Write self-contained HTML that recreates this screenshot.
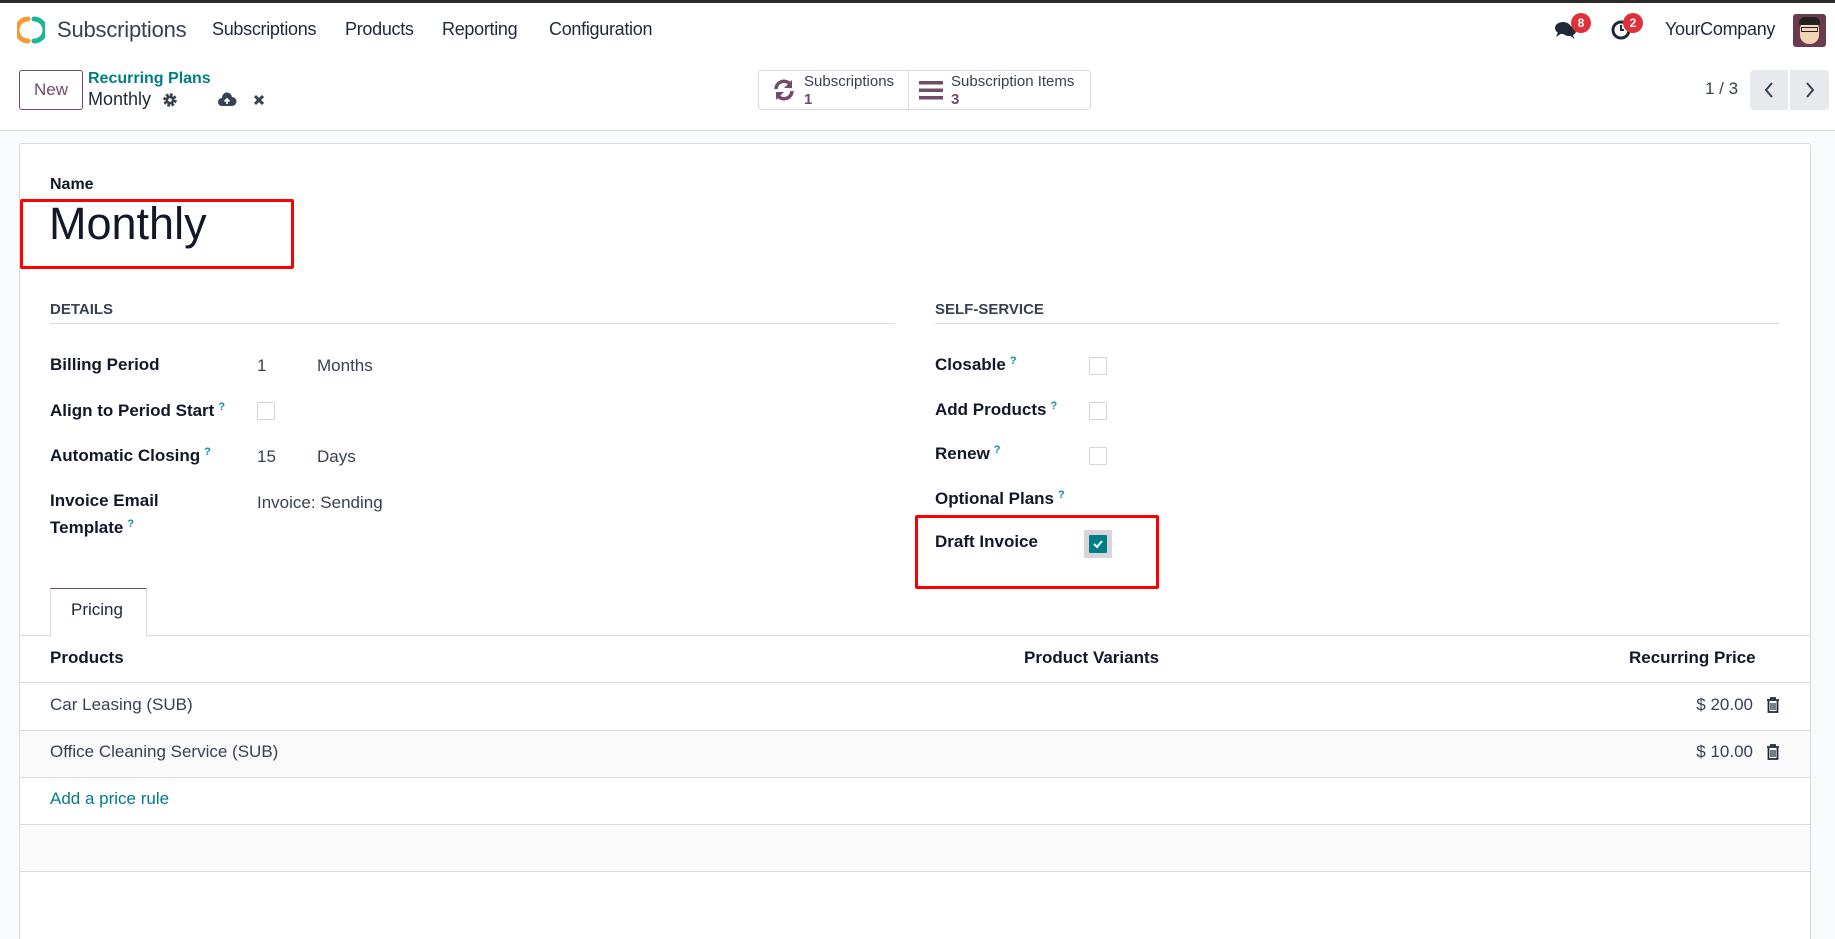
<!DOCTYPE html>
<html style="overflow:hidden;width:1835px;height:939px"><head><meta charset="utf-8"><style>
*{box-sizing:border-box;margin:0;padding:0}
body{width:1835px;height:939px;overflow:hidden;background:#f9fafb;font-family:"Liberation Sans",sans-serif;color:#374151;position:relative;font-size:17px}
.a{position:absolute;white-space:nowrap}
.lbl{font-weight:bold;color:#111827;font-size:17px}
.q{color:#0d8fa8;font-size:11px;vertical-align:top;margin-left:4px;font-weight:bold}
.cb{position:absolute;width:18px;height:18px;border:1px solid #d1d5db;background:#fff;border-radius:1px}
.hl{position:absolute;height:1px;background:#d8dadd}
</style></head><body>
<div class="a" style="left:0;top:0;width:1835px;height:3px;background:#2b2b2b"></div>
<div class="a" style="left:0;top:3px;width:1835px;height:128px;background:#fff;border-bottom:1px solid #d8dadd"></div>
<svg class="a" style="left:17px;top:16px" width="28" height="28" viewBox="0 0 28 28"><path d="M11 3 A11 11 0 0 0 11 25" stroke="#f39c34" stroke-width="5" fill="none" stroke-linecap="round"/><path d="M17 3 A11 11 0 0 1 17 25" stroke="#1bb59e" stroke-width="5" fill="none" stroke-linecap="round"/></svg>
<div class="a" style="left:57px;top:17px;font-size:22px;color:#374151;letter-spacing:-0.2px">Subscriptions</div>
<div class="a" style="left:212px;top:19px;font-size:18px;color:#1f2937;letter-spacing:-0.3px">Subscriptions</div>
<div class="a" style="left:345px;top:19px;font-size:18px;color:#1f2937;letter-spacing:-0.3px">Products</div>
<div class="a" style="left:442px;top:19px;font-size:18px;color:#1f2937;letter-spacing:-0.3px">Reporting</div>
<div class="a" style="left:549px;top:19px;font-size:18px;color:#1f2937;letter-spacing:-0.3px">Configuration</div>
<svg class="a" style="left:1554px;top:20px" width="24" height="20" viewBox="0 0 24 20"><ellipse cx="9" cy="8" rx="8" ry="6" fill="#1f2937"/><path d="M4 12 L2 17 L8 13Z" fill="#1f2937"/><ellipse cx="15" cy="11" rx="7" ry="5" fill="#1f2937"/><path d="M18 14 L21 19 L15 15Z" fill="#1f2937"/></svg>
<div class="a" style="left:1571px;top:13px;width:20px;height:20px;border-radius:10px;background:#e0313b;color:#fff;font-size:12px;font-weight:bold;text-align:center;line-height:20px">8</div>
<svg class="a" style="left:1610px;top:19px" width="22" height="22" viewBox="0 0 22 22"><circle cx="11" cy="11" r="8" stroke="#1f2937" stroke-width="3" fill="none"/><path d="M11 6V11H14" stroke="#1f2937" stroke-width="2" fill="none"/></svg>
<div class="a" style="left:1623px;top:13px;width:20px;height:20px;border-radius:10px;background:#e0313b;color:#fff;font-size:12px;font-weight:bold;text-align:center;line-height:20px">2</div>
<div class="a" style="left:1665px;top:19px;font-size:18px;color:#1f2937;letter-spacing:-0.3px">YourCompany</div>
<div class="a" style="left:1793px;top:14px;width:33px;height:33px;border-radius:3px;background:#6b3a4e;overflow:hidden"><div style="position:absolute;left:7px;top:6px;width:19px;height:24px;border-radius:9px;background:#f2d3b3"></div><div style="position:absolute;left:6px;top:3px;width:21px;height:8px;border-radius:6px 6px 2px 2px;background:#222"></div><div style="position:absolute;left:8px;top:13px;width:17px;height:5px;border:1.5px solid #222"></div></div>
<div class="a" style="left:19px;top:70px;width:64px;height:40px;border:1px solid #714b67;border-radius:3px;background:#fff;color:#714b67;font-size:17px;text-align:center;line-height:38px">New</div>
<div class="a" style="left:88px;top:70px;font-size:16px;color:#017e84;font-weight:bold">Recurring Plans</div>
<div class="a" style="left:88px;top:89px;font-size:18px;color:#1f2937">Monthly</div>
<svg class="a" style="left:162px;top:92px" width="16" height="16" viewBox="0 0 16 16"><circle cx="8" cy="8" r="5" fill="none" stroke="#374151" stroke-width="3.5" stroke-dasharray="2.5 1.4"/><circle cx="8" cy="8" r="4.5" fill="#374151"/><circle cx="8" cy="8" r="1.8" fill="#fff"/></svg>
<svg class="a" style="left:217px;top:92px" width="20" height="16" viewBox="0 0 20 16"><path d="M5 14 A4 4 0 0 1 5 6 A5 5 0 0 1 15 5 A4.5 4.5 0 0 1 15 14Z" fill="#374151"/><path d="M10 12V7M7.5 9.5L10 7L12.5 9.5" stroke="#fff" stroke-width="1.8" fill="none"/></svg>
<svg class="a" style="left:253px;top:94px" width="12" height="12" viewBox="0 0 12 12"><path d="M2 2L10 10M10 2L2 10" stroke="#374151" stroke-width="3"/></svg>
<div class="a" style="left:758px;top:70px;width:333px;height:40px;border:1px solid #d8dadd;border-radius:4px;background:#fff"></div>
<div class="a" style="left:908px;top:71px;width:1px;height:38px;background:#d8dadd"></div>
<svg class="a" style="left:772px;top:78px" width="24" height="24" viewBox="0 0 24 24"><path d="M4 11 A8 8 0 0 1 18 6" stroke="#714b67" stroke-width="3.5" fill="none"/><path d="M20 2V10H12Z" fill="#714b67"/><path d="M20 13 A8 8 0 0 1 6 18" stroke="#714b67" stroke-width="3.5" fill="none"/><path d="M4 22V14H12Z" fill="#714b67"/></svg>
<div class="a" style="left:804px;top:73px;font-size:15px;color:#374151">Subscriptions</div>
<div class="a" style="left:804px;top:91px;font-size:15px;color:#714b67;font-weight:bold">1</div>
<svg class="a" style="left:919px;top:80px" width="24" height="20" viewBox="0 0 24 20"><rect x="0" y="1" width="24" height="3.5" fill="#714b67"/><rect x="0" y="8.5" width="24" height="3.5" fill="#714b67"/><rect x="0" y="16" width="24" height="3.5" fill="#714b67"/></svg>
<div class="a" style="left:951px;top:73px;font-size:15px;color:#374151">Subscription Items</div>
<div class="a" style="left:951px;top:91px;font-size:15px;color:#714b67;font-weight:bold">3</div>
<div class="a" style="left:1705px;top:79px;font-size:17px;color:#374151">1 / 3</div>
<div class="a" style="left:1750px;top:70px;width:38px;height:40px;background:#e7e9ed;border-radius:4px 0 0 4px"></div>
<div class="a" style="left:1790px;top:70px;width:39px;height:40px;background:#e7e9ed;border-radius:0 4px 4px 0"></div>
<svg class="a" style="left:1762px;top:80px" width="14" height="20" viewBox="0 0 14 20"><path d="M10 3L4 10L10 17" stroke="#374151" stroke-width="2" fill="none"/></svg>
<svg class="a" style="left:1803px;top:80px" width="14" height="20" viewBox="0 0 14 20"><path d="M4 3L10 10L4 17" stroke="#374151" stroke-width="2" fill="none"/></svg>
<div class="a" style="left:19px;top:143px;width:1792px;height:796px;background:#fff;border:1px solid #d8dadd;border-bottom:none;border-radius:3px 3px 0 0"></div>
<div class="a lbl" style="left:50px;top:176px;font-size:16px">Name</div>
<div class="a" style="left:49px;top:198px;font-size:45px;color:#111827">Monthly</div>
<div class="a" style="left:20px;top:199px;width:274px;height:70px;border:3.5px solid #ff0000;border-radius:2px"></div>
<div class="a lbl" style="left:50px;top:301px;font-size:15px;color:#374151">DETAILS</div>
<div class="hl" style="left:50px;top:323px;width:845px"></div>
<div class="a lbl" style="left:935px;top:301px;font-size:15px;color:#374151">SELF-SERVICE</div>
<div class="hl" style="left:935px;top:323px;width:844px"></div>
<div class="a lbl" style="left:50px;top:355px">Billing Period</div>
<div class="a" style="left:257px;top:356px">1</div><div class="a" style="left:317px;top:356px">Months</div>
<div class="a lbl" style="left:50px;top:401px">Align to Period Start<span class="q">?</span></div>
<div class="cb" style="left:257px;top:402px"></div>
<div class="a lbl" style="left:50px;top:446px">Automatic Closing<span class="q">?</span></div>
<div class="a" style="left:257px;top:447px">15</div><div class="a" style="left:317px;top:447px">Days</div>
<div class="a lbl" style="left:50px;top:491px">Invoice Email</div>
<div class="a lbl" style="left:50px;top:518px">Template<span class="q">?</span></div>
<div class="a" style="left:257px;top:493px">Invoice: Sending</div>
<div class="a lbl" style="left:935px;top:355px">Closable<span class="q">?</span></div>
<div class="cb" style="left:1089px;top:357px"></div>
<div class="a lbl" style="left:935px;top:400px">Add Products<span class="q">?</span></div>
<div class="cb" style="left:1089px;top:402px"></div>
<div class="a lbl" style="left:935px;top:444px">Renew<span class="q">?</span></div>
<div class="cb" style="left:1089px;top:447px"></div>
<div class="a lbl" style="left:935px;top:489px">Optional Plans<span class="q">?</span></div>
<div class="a lbl" style="left:935px;top:532px">Draft Invoice</div>
<div class="a" style="left:1084px;top:530px;width:28px;height:28px;background:#d9d4d9"></div>
<div class="a" style="left:1089px;top:535px;width:18px;height:18px;background:#017e84;border-radius:1px"></div>
<svg class="a" style="left:1092px;top:538px" width="12" height="12" viewBox="0 0 12 12"><path d="M2 6L5 9L10 3" stroke="#fff" stroke-width="2" fill="none"/></svg>
<div class="a" style="left:915px;top:515px;width:244px;height:74px;border:3.5px solid #ff0000;border-radius:2px"></div>
<div class="a" style="left:50px;top:588px;width:97px;height:49px;border:1px solid #d8dadd;border-top:1px solid #714b67;border-bottom:none;background:#fff;z-index:2"></div>
<div class="a" style="left:71px;top:600px;z-index:3;color:#1f2937">Pricing</div>
<div class="hl" style="left:20px;top:635px;width:1790px"></div>
<div class="a lbl" style="left:50px;top:648px">Products</div>
<div class="a lbl" style="left:1024px;top:648px">Product Variants</div>
<div class="a lbl" style="left:1629px;top:648px;width:124px;text-align:right">Recurring Price</div>
<div class="hl" style="left:20px;top:682px;width:1790px"></div>
<div class="a" style="left:50px;top:695px">Car Leasing (SUB)</div>
<div class="a" style="left:1600px;top:695px;width:153px;text-align:right">$ 20.00</div>
<div class="a" style="left:20px;top:730px;width:1790px;height:47px;background:#fafafa"></div>
<div class="hl" style="left:20px;top:730px;width:1790px"></div>
<div class="a" style="left:50px;top:742px">Office Cleaning Service (SUB)</div>
<div class="a" style="left:1600px;top:742px;width:153px;text-align:right">$ 10.00</div>
<svg class="a" style="left:1766px;top:697px" width="14" height="16" viewBox="0 0 14 16"><path d="M1 3H13M5 3V1H9V3M2.5 4V15H11.5V4" stroke="#1f2937" stroke-width="1.8" fill="none"/><path d="M5 6V13M7 6V13M9 6V13" stroke="#1f2937" stroke-width="1.2"/></svg>
<svg class="a" style="left:1766px;top:744px" width="14" height="16" viewBox="0 0 14 16"><path d="M1 3H13M5 3V1H9V3M2.5 4V15H11.5V4" stroke="#1f2937" stroke-width="1.8" fill="none"/><path d="M5 6V13M7 6V13M9 6V13" stroke="#1f2937" stroke-width="1.2"/></svg>
<div class="hl" style="left:20px;top:777px;width:1790px"></div>
<div class="a" style="left:50px;top:789px;color:#017e84">Add a price rule</div>
<div class="a" style="left:20px;top:824px;width:1790px;height:47px;background:#fafafa"></div>
<div class="hl" style="left:20px;top:824px;width:1790px"></div>
<div class="hl" style="left:20px;top:871px;width:1790px"></div>
</body></html>
